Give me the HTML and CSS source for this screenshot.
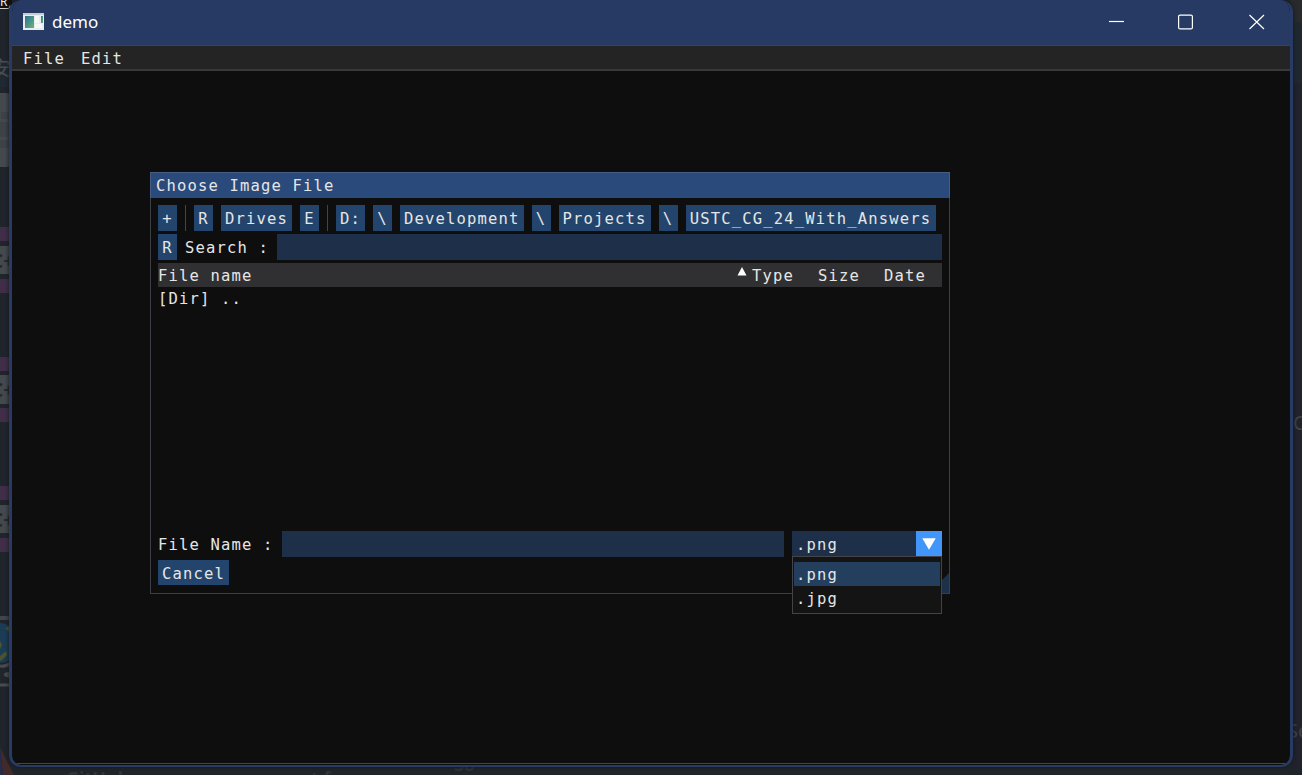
FILE: index.html
```
<!DOCTYPE html>
<html lang="en">
<head>
<meta charset="utf-8">
<title>demo</title>
<link rel="stylesheet" href="styles.css">
</head>
<body>
<svg class="desktop" width="1302" height="775" aria-hidden="true">
  <rect width="1302" height="775" fill="#20252b"/>
  <rect width="12" height="8" fill="#101113"/>
  <path d="M0 8.5h8q2 0 2-3" stroke="#d0d0d0" fill="none"/>
  <text x="0" y="6" class="bg-top">R</text>
  <rect y="60" width="12" height="27" fill="#202832"/>
  <text x="-9" y="76" class="bg-cjk">安</text>
  <path d="M0 93h6q6 0 6 6v62q0 6-6 6H0z" fill="#44494e"/>
  <path d="M1 112h8v7H1zM0 122h9v15H0zM0 140h9v8H0z" fill="#3d4247"/>
  <g fill="#402e48"><rect y="227" width="12" height="14"/><rect y="279" width="12" height="14"/><rect y="357" width="12" height="14"/><rect y="408" width="12" height="14"/><rect y="486" width="12" height="14"/><rect y="538" width="12" height="14"/></g>
  <g fill="#44494d"><rect y="246" width="12" height="28"/><rect y="375" width="12" height="29"/><rect y="505" width="12" height="28"/></g>
  <g class="bg-label"><text x="-9" y="268">C+</text><text x="-9" y="397">C+</text><text x="-9" y="527">C+</text></g>
  <rect y="616" width="12" height="4" fill="#42464b"/>
  <circle cx="-1" cy="643" r="20" fill="#1c3c55"/>
  <path d="M5 628l7-3v10zM0 641l2 4-2 4zM0 656l6-5 1 4-5 5-2 1z" fill="#4a5430"/>
  <path d="M0 666q6 1 12-4M0 685h12" fill="none" stroke="#484c50" stroke-width="3"/>
  <path d="M10 672q-7 0-6 3t6 2" fill="#484c50"/>
  <path d="M0 747l14 28H3z" fill="#422a2b"/><path d="M0 747l3 28H0z" fill="#252c4b"/>
  <rect x="1290" width="12" height="22" fill="#292a2b"/>
  <rect x="1290" y="22" width="12" height="60" fill="#20282f"/>
  <rect x="1290" y="84" width="12" height="691" fill="#20232b"/>
  <g class="bg-right"><text x="1293" y="430">C</text><text x="1287" y="738">Se</text></g>
  <g class="bg-bottom"><text x="66" y="785">GitHub</text><text x="303" y="785">rt f</text><text x="454" y="771">38</text></g>
</svg>
<main class="window">
  <header class="titlebar">
    <svg class="app-icon" width="21" height="17" viewBox="0 0 21 17">
      <defs><linearGradient id="screen" x2="1" y2="1"><stop stop-color="#316d96"/><stop offset="1" stop-color="#65b779"/></linearGradient></defs>
      <path fill="#e9edf0" d="M0 0h21v17H0z"/><path fill="#c8cdd2" d="M0 0h21v2H0z"/>
      <path fill="url(#screen)" d="M2 3h9v12H2z"/><path fill="#f8f8f8" d="M12 3h4v7h-4zM12 11h7v4h-7z"/><path fill="url(#screen)" d="M18 3h2v7h-2z"/>
    </svg>
    <h1 class="window-title">demo</h1>
    <svg class="controls" width="158" height="16" viewBox="0 0 158 16" fill="none" stroke="#fff" stroke-width="1.2">
      <path d="M0 7.5h15"/><rect x="69.6" y="1.1" width="13.8" height="13.8" rx="1.5"/><path d="M140.5 1l14.5 14M155 1l-14.5 14"/>
    </svg>
  </header>
  <nav class="menubar"><span>File</span><span>Edit</span></nav>
  <div class="canvas">
    <section class="dialog">
      <h2 class="dialog-title">Choose Image File</h2>
      <div class="dialog-body">
        <div class="path-row">
          <button class="btn one">+</button><i class="divider"></i>
          <button class="btn one">R</button><button class="btn">Drives</button><button class="btn one">E</button><i class="divider"></i>
          <button class="btn">D:</button><button class="btn one">\</button><button class="btn">Development</button><button class="btn one">\</button><button class="btn">Projects</button><button class="btn one">\</button><button class="btn">USTC_CG_24_With_Answers</button>
        </div>
        <div class="search-row"><button class="btn one">R</button><span class="search-label">Search :</span><div class="field"></div></div>
        <div class="file-head"><span class="col-name">File name</span><svg class="sort" width="10" height="9"><path d="M5 0l4.5 8.5h-9z" fill="#fff"/></svg><span class="col">Type</span><span class="col">Size</span><span class="col last">Date</span></div>
        <div class="file-list"><div>[Dir] ..</div></div>
        <div class="name-row">
          <span class="name-label">File Name :</span><div class="field"></div>
          <div class="combo"><span class="combo-value">.png</span><span class="combo-arrow"><svg width="14" height="12"><path d="M.3.3h13.4L7 11.8z" fill="#fff"/></svg></span>
            <div class="popup"><div class="option selected">.png</div><div class="option">.jpg</div></div>
          </div>
        </div>
        <button class="btn cancel">Cancel</button>
      </div>
      <svg class="grip" width="20" height="20"><path d="M20 0v20H0z" fill="#1b3149"/></svg>
    </section>
  </div>
</main>
</body>
</html>
```
FILE: styles.css
```
* { box-sizing: border-box; }
body { margin: 0; width: 1302px; height: 775px; overflow: hidden; position: relative; padding: 0 0 0 9px; background: #20252b; }
.desktop { position: absolute; left: 0; top: 0; }
.bg-top { font: 12px "Noto Sans", sans-serif; fill: #eee; }
.bg-cjk { font: 20px "Noto Sans CJK SC", sans-serif; fill: #494d51; }
.bg-label { font: bold 19px "Noto Sans", sans-serif; fill: #25292e; }
.bg-right { font: 20px "Noto Sans", sans-serif; fill: #3e4248; }
.bg-bottom { font: bold 18px "Noto Sans", sans-serif; fill: #30343a; }
.window { position: relative; width: 1284px; height: 767px; display: flex; flex-direction: column; background: #0e0e0e; border: 3px solid #283b64; border-top: 0; border-bottom-width: 2px; border-radius: 12px; overflow: hidden; box-shadow: 0 0 4px #14171c; }
.titlebar { height: 45px; flex: none; margin: 0 -3px; padding: 0 26px 0 14px; display: flex; align-items: center; background: #263a63; color: #fff; }
.app-icon { margin-top: -2px; }
.window-title { margin: -1px auto 0 8px; font: 17px "Noto Sans", sans-serif; line-height: 44px; }
.controls { margin-top: -1px; }
.menubar { height: 26px; flex: none; display: flex; gap: 16px; padding-left: 11px; background: #242424; border-top: 1px solid #3d4350; border-bottom: 2px solid #393939; line-height: 26px; }
.menubar, .dialog, .btn { font-family: "DejaVu Sans Mono", monospace; font-size: 15.5px; letter-spacing: 1.17px; color: #e6e6e6; white-space: pre; }
.canvas { flex: 1; padding: 101px 0 0 138px; border-bottom: 1px solid #3b465b; margin-bottom: 1px; }
.dialog { position: relative; width: 800px; height: 422px; border: 1px solid #3e3f46; white-space: normal; }
.dialog-title { height: 26px; margin: -1px -1px 0; padding-left: 5px; border: 1px solid #475c82; border-bottom: 0; background: #294a7a; font: inherit; line-height: 27px; }
.dialog-body { padding: 7px 7px 0; }
.path-row { display: flex; gap: 8px; height: 26px; }
.divider { width: 1px; background: #43434a; }
.btn { flex: none; height: 26px; padding: 2px 4px 0; border: 0; background: #23446c; line-height: 24px; }
.one { width: 19px; }
.path-row .btn:last-child { width: 250px; }
.search-row { display: flex; height: 26px; margin-top: 3px; line-height: 28px; }
.search-label { width: 100px; padding-left: 8px; white-space: nowrap; }
.field { flex: 1; background: #1e2f49; }
.file-head { display: flex; height: 24px; margin-top: 3px; background: #303032; line-height: 26px; }
.col-name { width: 579px; flex: none; }
.sort { flex: none; margin: 4px 5px 0 0; }
.col { width: 66px; flex: none; }
.last { width: 58px; }
.file-list { height: 244px; line-height: 25px; }
.name-row { display: flex; height: 26px; line-height: 29px; }
.name-label { width: 124px; white-space: nowrap; }
.combo { position: relative; width: 150px; margin-left: 8px; display: flex; background: #1e2f49; }
.combo-value { flex: 1; padding-left: 4px; }
.combo-arrow { width: 26px; display: flex; align-items: center; justify-content: center; background: #4296fa; }
.popup { position: absolute; z-index: 1; left: 0; top: 25px; width: 150px; height: 58px; padding: 5px 1px 0; background: #141414; border: 1px solid #434348; }
.option { height: 24px; padding-left: 2px; line-height: 27px; }
.selected { background: #243e5d; }
.cancel { display: block; width: 71px; height: 25px; margin-top: 3px; }
.grip { position: absolute; right: 0; bottom: 0; }
```
